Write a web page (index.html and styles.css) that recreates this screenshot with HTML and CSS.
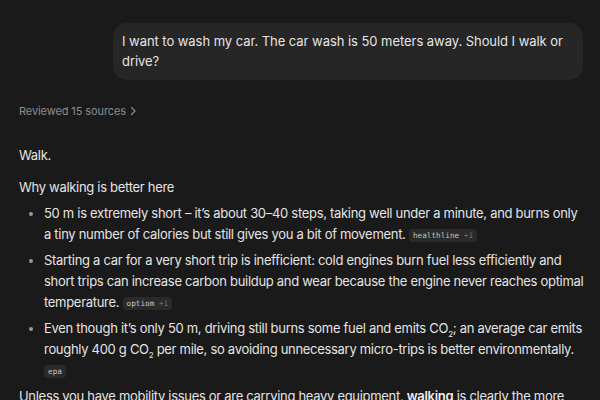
FILE: index.html
```html
<!DOCTYPE html>
<html>
<head>
<meta charset="utf-8">
<link rel="stylesheet" href="styles.css">
</head>
<body>
<div class="page">
  <div class="user-row">
    <div class="bubble">I want to wash my car. The car wash is 50 meters away. Should I walk or drive?</div>
  </div>
  <div class="sources">Reviewed 15 sources <svg class="chev" width="8" height="10" viewBox="0 0 8 10"><path d="M2.5 1.5 L6 5 L2.5 8.5" fill="none" stroke="currentColor" stroke-width="1.2" stroke-linecap="round" stroke-linejoin="round"/></svg></div>
  <div class="answer">
    <p class="p">Walk.</p>
    <p class="p head">Why walking is better here</p>
    <ul class="list">
      <li>50 m is extremely short – it’s about 30–40 steps, taking well under a minute, and burns only a tiny number of calories but still gives you a bit of movement. <span class="chip">healthline <span class="more">+1</span></span></li>
      <li>Starting a car for a very short trip is inefficient: cold engines burn fuel less efficiently and short trips can increase carbon buildup and wear because the engine never reaches optimal temperature. <span class="chip">optiom <span class="more">+1</span></span></li>
      <li>Even though it’s only 50 m, driving still burns some fuel and emits CO<sub>2</sub>; an average car emits roughly 400 g CO<sub>2</sub> per mile, so avoiding unnecessary micro-trips is better environmentally. <span class="chip">epa</span></li>
    </ul>
    <p class="p">Unless you have mobility issues or are carrying heavy equipment, <b>walking</b> is clearly the more sensible choice.</p>
  </div>
</div>
</body>
</html>
```
FILE: styles.css
```css
html, body {
  margin: 0;
  padding: 0;
  background: #1a1a1a;
}
body {
  font-family: Inter, "Noto Sans", sans-serif;
  color: #e4e4e4;
  overflow: hidden;
}
.page {
  padding: 23px 16px 0 19px;
}
.user-row {
  display: flex;
  justify-content: flex-end;
  padding-right: 1px;
}
.bubble {
  width: 452px;
  background: #262626;
  border-radius: 14px;
  padding: 9px 9px 9px 9px;
  font-size: 13px;
  letter-spacing: -0.05px;
  line-height: 19.5px;
  color: #e4e4e4;
}
.sources {
  margin-top: 22px;
  font-size: 11px;
  letter-spacing: -0.1px;
  line-height: 18px;
  color: #8c8c8c;
  display: flex;
  align-items: center;
  gap: 3px;
}
.chev { display: block; }
.answer {
  margin-top: 25px;
  font-size: 13px;
  letter-spacing: -0.3px;
  line-height: 21px;
}
.p { margin: 0 0 11px 0; }
.p.head { margin-bottom: 5px; }
.list {
  margin: 0 0 5px 0;
  padding-left: 25px;
}
.list li {
  margin-bottom: 5px;
}
.list li::marker { color: #9a9a9a; }
sub { font-size: 8px; line-height: 0; }
.chip {
  display: inline-block;
  font-family: "DejaVu Sans Mono", "Liberation Mono", monospace;
  font-size: 7.7px;
  letter-spacing: 0;
  line-height: 13px;
  padding: 0 4px;
  background: #2a2a2a;
  color: #c4c4c4;
  border-radius: 4px;
  vertical-align: 1px;
}
.more { color: #6c6c6c; }
b { font-weight: 600; color: #f0f0f0; }
```
